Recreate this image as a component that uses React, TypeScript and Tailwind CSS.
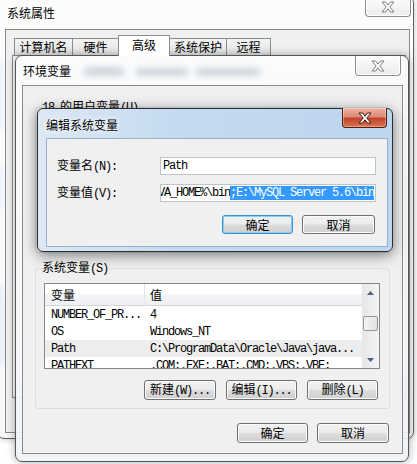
import React from 'react';

const cjk = "font-['Noto_Sans_CJK_SC',sans-serif]";
const mono = "font-['Liberation_Mono','Noto_Sans_CJK_SC',monospace] text-[12px] tracking-[-1.2px]";

const XGlyph = ({ stroke }: { stroke: string }) => (
  <svg width="14" height="12" viewBox="-1 -1 14 12">
    <path
      d="M0 0H3.6L6 3.2L8.4 0H12L7.8 5L12 10H8.4L6 6.8L3.6 10H0L4.2 5Z"
      fill="#fff"
      stroke={stroke}
      strokeWidth="1"
      strokeLinejoin="round"
    />
  </svg>
);

const CloseInactive = () => (
  <div className="w-[46px] h-[20px] shrink-0 flex items-center justify-center rounded-b-[4px] border border-t-0 border-[#8d8d8d] bg-[linear-gradient(#fdfdfd,#ececec)] shadow-[inset_0_0_0_1px_#ffffff]">
    <XGlyph stroke="#7a7a7a" />
  </div>
);

const CloseRed = () => (
  <div className="w-[45px] h-[20px] shrink-0 flex items-center justify-center rounded-b-[4px] border border-t-0 border-[#5a1a0e] bg-[linear-gradient(#ebb3a6,#dd8b78_45%,#c4442a_55%,#d6744f)] shadow-[inset_0_0_0_1px_rgba(255,255,255,0.35)]">
    <XGlyph stroke="#4a1208" />
  </div>
);

// Chinese text followed by the SimSun-like ascii part
const Mixed = ({ zh, en }: { zh: string; en?: string }) => (
  <span className="whitespace-pre">
    {zh}
    {en && <span className={mono}>{en}</span>}
  </span>
);

const Btn = ({ children, className = '', focus = false }: { children: React.ReactNode; className?: string; focus?: boolean }) => (
  <div
    className={`flex items-center justify-center rounded-[3px] border text-[12px] leading-none bg-[linear-gradient(#f2f2f2,#ebebeb_48%,#dddddd_52%,#cfcfcf)] ${
      focus
        ? 'border-[#3c8fd0] shadow-[inset_0_0_0_1px_#7fd3f7]'
        : 'border-[#707070] shadow-[inset_0_0_0_1px_#fbfbfb]'
    } ${className}`}
  >
    {children}
  </div>
);

const tabs = [
  { label: '计算机名', w: 'w-[59px]' },
  { label: '硬件', w: 'w-[47px]' },
  { label: '高级', w: 'w-[52px]', active: true },
  { label: '系统保护', w: 'w-[58px]' },
  { label: '远程', w: 'w-[45px]' },
];

const rows = [
  { name: 'NUMBER_OF_PR...', value: '4' },
  { name: 'OS', value: 'Windows_NT' },
  { name: 'Path', value: 'C:\\ProgramData\\Oracle\\Java\\java...', sel: true },
  { name: 'PATHEXT', value: '.COM;.EXE;.BAT;.CMD;.VBS;.VBE;' },
];

export default function App() {
  return (
    <div className={`relative w-[417px] h-[464px] overflow-hidden bg-white text-[12px] text-black ${cjk}`}>
      {/* desktop colour seen through the glass frame */}
      <div className="absolute left-[-5px] top-[60px] w-[10px] h-[70px] rounded-full bg-[#b8d5ef] blur-[3px]" />
      <div className="absolute left-[-5px] top-[165px] w-[10px] h-[45px] rounded-full bg-[#c4dcf1] blur-[3px]" />
      <div className="absolute left-[-5px] top-[285px] w-[10px] h-[80px] rounded-full bg-[#b3d0ec] blur-[3px]" />

      {/* 系统属性 */}
      <div className="absolute left-[-3px] top-[-4px] w-[417px] h-[443px] flex flex-col rounded-[7px] border border-[#5f5f5f] bg-[linear-gradient(rgba(252,252,253,0.8),rgba(243,245,247,0.8))] pl-[7px] pr-[3px] pb-[5px] shadow-[0_0_6px_rgba(0,0,0,0.25)]">
        <div className="h-[32px] flex items-start justify-between">
          <span className="mt-[8px] ml-[2px] leading-[16px]">系统属性</span>
          <div className="mr-[-1px]">
            <CloseInactive />
          </div>
        </div>
        <div className="flex-1 flex flex-col border border-[#8a8a8a] bg-[#f0f0f0]">
          <div className="h-[25px] flex items-end pl-[8px]">
            {tabs.map((t, i) =>
              t.active ? (
                <div
                  key={t.label}
                  className={`${t.w} relative z-10 h-[21px] mb-[-1px] ml-[-1px] pb-[3px] flex items-center justify-center border border-b-0 border-[#898c95] bg-white`}
                >
                  {t.label}
                </div>
              ) : (
                <div
                  key={t.label}
                  className={`${t.w} h-[17px] flex items-center justify-center border border-b-0 border-[#898c95] bg-[linear-gradient(#f3f3f3,#e5e5e5)] ${i > 0 ? 'ml-[-1px]' : ''}`}
                >
                  {t.label}
                </div>
              )
            )}
          </div>
          <div className="flex-1 ml-[6px] mr-[3px] mb-[34px] border border-[#898c95] bg-white" />
        </div>
      </div>

      {/* 环境变量 */}
      <div className="absolute left-[15px] top-[55px] w-[394px] h-[407px] flex flex-col rounded-[7px] border border-[#555555] bg-[linear-gradient(rgba(250,251,252,0.92),rgba(240,243,246,0.92))] pl-[6px] pr-[5px] pb-[7px] shadow-[0_0_8px_rgba(0,0,0,0.35)]">
        <div className="h-[29px] flex items-start justify-between">
          <span className="mt-[7px] ml-[1px] leading-[16px]">环境变量</span>
          <div className="mr-[2px]">
            <CloseInactive />
          </div>
        </div>
        <div className="flex-1 flex flex-col border border-[#8a8a8a] bg-[#f0f0f0]">
          <fieldset className="mt-[12px] mx-[12px] h-[155px] rounded-[3px] border border-[#d5dfe5]">
            <legend className="ml-[5px] px-[1px] leading-[16px]">
              <Mixed zh="" en="18 " />
              <Mixed zh="的用户变量" en="(U)" />
            </legend>
          </fieldset>

          <fieldset className="mt-[6px] mx-[12px] h-[150px] rounded-[3px] border border-[#d5dfe5]">
            <legend className="ml-[5px] px-[1px] leading-[16px]">
              <Mixed zh="系统变量" en="(S)" />
            </legend>
            <div className="mt-[6px] ml-[8px] mr-[9px] h-[86px] flex overflow-hidden border border-[#828790] bg-white">
              <div className="flex-1 flex flex-col overflow-hidden">
                <div className="h-[22px] shrink-0 flex border-b border-[#d5d5d5] bg-[linear-gradient(#ffffff,#ffffff_45%,#f4f5f7_50%,#eef0f3)]">
                  <div className="w-[100px] pl-[6px] flex items-center border-r border-[#e3e8ee]">变量</div>
                  <div className="flex-1 pl-[5px] flex items-center">值</div>
                </div>
                {rows.map((r) => (
                  <div key={r.name} className={`h-[17px] shrink-0 flex items-center ${r.sel ? 'bg-[#ededed]' : ''}`}>
                    <div className={`w-[100px] pl-[6px] whitespace-pre ${mono}`}>{r.name}</div>
                    <div className={`flex-1 pl-[5px] whitespace-pre overflow-hidden ${mono}`}>{r.value}</div>
                  </div>
                ))}
              </div>
              {/* scrollbar */}
              <div className="w-[17px] shrink-0 flex flex-col bg-[linear-gradient(90deg,#e6e6e6,#f4f4f4)]">
                <div className="h-[17px] flex items-center justify-center">
                  <svg width="7" height="4" viewBox="0 0 7 4">
                    <path d="M0 4L3.5 0L7 4Z" fill="#4d6185" />
                  </svg>
                </div>
                <div className="flex-1">
                  <div className="mt-[15px] mx-[1px] h-[15px] rounded-[2px] border border-[#979797] bg-[linear-gradient(90deg,#f4f4f4,#e2e2e2)]" />
                </div>
                <div className="h-[17px] flex items-center justify-center">
                  <svg width="7" height="4" viewBox="0 0 7 4">
                    <path d="M0 0L3.5 4L7 0Z" fill="#4d6185" />
                  </svg>
                </div>
              </div>
            </div>
            <div className="mt-[11px] mr-[11px] flex justify-end gap-[10px]">
              <Btn className="w-[72px] h-[20px]">
                <Mixed zh="新建" en="(W)..." />
              </Btn>
              <Btn className="w-[71px] h-[20px]">
                <Mixed zh="编辑" en="(I)..." />
              </Btn>
              <Btn className="w-[71px] h-[20px]">
                <Mixed zh="删除" en="(L)" />
              </Btn>
            </div>
          </fieldset>

          <div className="mt-[14px] pr-[13px] flex justify-end gap-[9px]">
            <Btn className="w-[71px] h-[20px]">确定</Btn>
            <Btn className="w-[72px] h-[20px]">取消</Btn>
          </div>
        </div>
      </div>

      {/* blurred glass behind the env title */}
      <div className="absolute left-[84px] top-[67px] w-[40px] h-[9px] rounded-full bg-[#7f8ea6]/35 blur-[3px]" />
      <div className="absolute left-[136px] top-[68px] w-[52px] h-[8px] rounded-full bg-[#7f8ea6]/35 blur-[3px]" />
      <div className="absolute left-[196px] top-[68px] w-[64px] h-[8px] rounded-full bg-[#7f8ea6]/35 blur-[3px]" />

      {/* 编辑系统变量 */}
      <div className="absolute left-[37px] top-[108px] w-[356px] h-[144px] flex flex-col rounded-[6px] border border-[#2e2e2e] bg-[linear-gradient(90deg,#dce8f4,#c4daf0_40%,#bdd5ee)] pl-[8px] pr-[4px] pb-[4px] shadow-[0_3px_14px_rgba(0,0,0,0.5)]">
        <div className="h-[29px] flex items-start justify-between">
          <span className="mt-[8px] leading-[16px] [text-shadow:0_0_6px_#ffffff,0_0_3px_#ffffff]">编辑系统变量</span>
          <div className="mt-[-1px] mr-[1px]">
            <CloseRed />
          </div>
        </div>
        <div className="flex-1 flex flex-col border border-[#99b0c9] bg-[#f0f0f0] pl-[10px]">
          <div className="mt-[18px] flex items-center">
            <div className="w-[103px] leading-[16px]">
              <Mixed zh="变量名" en="(N):" />
            </div>
            <div className="w-[216px] h-[18px] flex items-center border border-[#bcc4ce] bg-white pl-[2px]">
              <span className={mono}>Path</span>
            </div>
          </div>
          <div className="mt-[9px] flex items-center">
            <div className="w-[103px] leading-[16px]">
              <Mixed zh="变量值" en="(V):" />
            </div>
            <div className="w-[216px] h-[18px] flex items-center justify-end overflow-hidden border border-[#bcc4ce] bg-white pr-[1px]">
              <span className={`whitespace-pre leading-[14px] ${mono}`}>
                %JAVA_HOME%\bin
                <span className="bg-[#3399ff] text-white">;E:\MySQL Server 5.6\bin</span>
              </span>
            </div>
          </div>
          <div className="mt-[13px] pr-[12px] flex justify-end gap-[9px]">
            <Btn focus className="w-[71px] h-[19px]">确定</Btn>
            <Btn className="w-[73px] h-[19px]">取消</Btn>
          </div>
        </div>
      </div>
    </div>
  );
}
